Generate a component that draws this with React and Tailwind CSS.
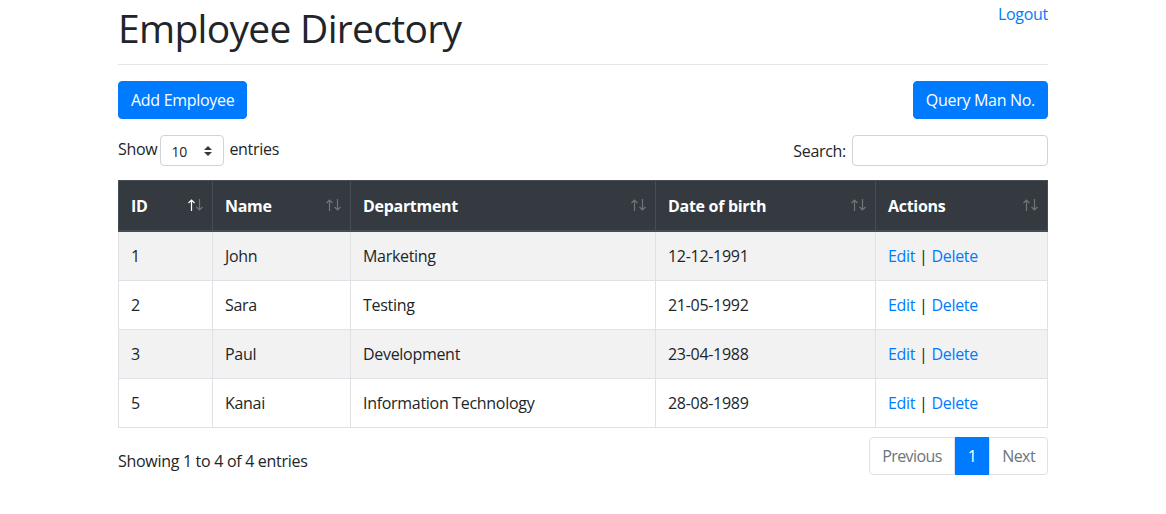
const employees = [
  { id: 1, name: 'John', department: 'Marketing', dob: '12-12-1991' },
  { id: 2, name: 'Sara', department: 'Testing', dob: '21-05-1992' },
  { id: 3, name: 'Paul', department: 'Development', dob: '23-04-1988' },
  { id: 5, name: 'Kanai', department: 'Information Technology', dob: '28-08-1989' },
];

const columns = [
  { label: 'ID', width: 'w-[94px]', active: true },
  { label: 'Name', width: 'w-[138px]' },
  { label: 'Department', width: 'w-[305px]' },
  { label: 'Date of birth', width: 'w-[220px]' },
  { label: 'Actions', width: '' },
];

const Arrow = ({ down, className }) => (
  <svg className={className} width="7" height="12" viewBox="0 0 7 12">
    {down ? (
      <path d="M3.5 0 V11 M0.5 8 L3.5 11 L6.5 8" stroke="currentColor" strokeWidth="1.2" fill="none" />
    ) : (
      <path d="M3.5 12 V1 M0.5 4 L3.5 1 L6.5 4" stroke="currentColor" strokeWidth="1.2" fill="none" />
    )}
  </svg>
);

const SortIcons = ({ active }) => (
  <span className="absolute right-[9px] top-[18px] flex gap-[1px]">
    <Arrow className={active ? 'text-white' : 'text-white/30'} />
    <Arrow down className="text-white/30" />
  </span>
);

const App = () => {
  return (
    <div className="min-h-screen bg-white text-[#212529] text-[16px] leading-6 tracking-[-0.3px] font-['Open_Sans',sans-serif]">
      <div className="w-[930px] mx-auto">
        <div className="flex justify-between items-start">
          <h1 className="text-[39px] leading-[48px] mt-[4px] tracking-[-0.7px]">Employee Directory</h1>
          <a href="#" className="text-[#007bff] mt-[2px]">Logout</a>
        </div>
        <hr className="border-0 border-t border-[#e5e5e5] mt-[12px] mb-[16px]" />

        <div className="flex justify-between">
          <button className="bg-[#007bff] text-white px-3 py-[6px] border border-[#007bff] rounded">
            Add Employee
          </button>
          <button className="bg-[#007bff] text-white px-3 py-[6px] border border-[#007bff] rounded">
            Query Man No.
          </button>
        </div>

        <div className="flex justify-between items-center mt-4">
          <div className="flex items-center">
            <span className="-mt-[3px] mr-[3px]">Show</span>
            <div className="relative w-[64px] h-[31px] border border-[#ced4da] rounded flex items-center pl-[10px] text-[14px]">
              <span className="mt-[2px]">10</span>
              <svg className="absolute right-[11px] top-[10px]" width="8" height="10" viewBox="0 0 8 10">
                <path d="M4 0 L8 4 H0 Z M0 6 H8 L4 10 Z" fill="#343a40" />
              </svg>
            </div>
            <span className="-mt-[3px] ml-[5px]">entries</span>
          </div>
          <label className="flex items-center gap-[6px]">
            <span>Search:</span>
            <input className="w-[196px] h-[31px] border border-[#ced4da] rounded px-2 text-[14px]" />
          </label>
        </div>

        <table className="w-full mt-[14px] border-collapse">
          <thead>
            <tr className="bg-[#343a40] text-white">
              {columns.map((c) => (
                <th
                  key={c.label}
                  className={`${c.width} relative text-left font-bold pl-3 pr-[30px] pt-[13px] pb-3 border border-[#454d55] border-b-2 border-b-[#454d55]`}
                >
                  {c.label}
                  <SortIcons active={c.active} />
                </th>
              ))}
            </tr>
          </thead>
          <tbody>
            {employees.map((e, i) => (
              <tr key={e.id} className={i % 2 === 0 ? 'bg-[#f2f2f2]' : 'bg-white'}>
                <td className="p-3 border border-[#dee2e6]">{e.id}</td>
                <td className="p-3 border border-[#dee2e6]">{e.name}</td>
                <td className="p-3 border border-[#dee2e6]">{e.department}</td>
                <td className="p-3 border border-[#dee2e6]">{e.dob}</td>
                <td className="p-3 border border-[#dee2e6]">
                  <a href="#" className="text-[#007bff]">Edit</a> | <a href="#" className="text-[#007bff]">Delete</a>
                </td>
              </tr>
            ))}
          </tbody>
        </table>

        <div className="flex justify-between items-start mt-[9px]">
          <div className="pt-3">Showing 1 to 4 of 4 entries</div>
          <ul className="flex tracking-[-0.6px]">
            <li className="px-3 py-2 leading-5 border border-[#dee2e6] rounded-l text-[#6c757d]">Previous</li>
            <li className="px-3 py-2 leading-5 border border-[#007bff] bg-[#007bff] text-white">1</li>
            <li className="px-3 py-2 leading-5 border border-[#dee2e6] rounded-r text-[#6c757d]">Next</li>
          </ul>
        </div>
      </div>
    </div>
  );
};

export default App;
